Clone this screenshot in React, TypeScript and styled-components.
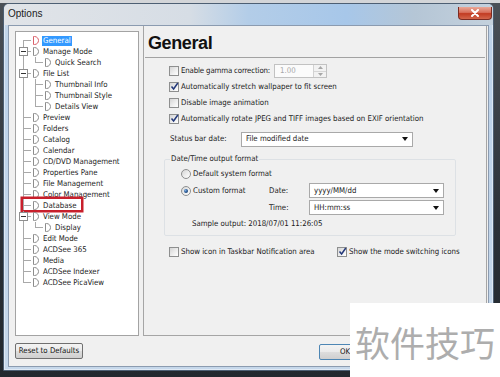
import React from "react";
import styled, { createGlobalStyle } from "styled-components";

const UI_FONT = `"DejaVu Sans Condensed", "Liberation Sans", Arial, sans-serif`;
const UI_SIZE = "7.8px";

const GlobalStyle = createGlobalStyle`
  html, body {
    margin: 0;
    padding: 0;
    background: #2e343a;
  }
  body {
    font-family: ${UI_FONT};
  }
  * {
    box-sizing: border-box;
  }
`;

type Line = "full" | "top" | "bottom" | "none";

interface TreeItem {
  label: string;
  level: 0 | 1;
  expand?: boolean;
  lastChild?: boolean;
  selected?: boolean;
  marked?: boolean;
}

const treeItems: TreeItem[] = [
  { label: "General", level: 0, selected: true },
  { label: "Manage Mode", level: 0, expand: true },
  { label: "Quick Search", level: 1, lastChild: true },
  { label: "File List", level: 0, expand: true },
  { label: "Thumbnail Info", level: 1 },
  { label: "Thumbnail Style", level: 1 },
  { label: "Details View", level: 1, lastChild: true },
  { label: "Preview", level: 0 },
  { label: "Folders", level: 0 },
  { label: "Catalog", level: 0 },
  { label: "Calendar", level: 0 },
  { label: "CD/DVD Management", level: 0 },
  { label: "Properties Pane", level: 0 },
  { label: "File Management", level: 0 },
  { label: "Color Management", level: 0 },
  { label: "Database", level: 0, marked: true },
  { label: "View Mode", level: 0, expand: true },
  { label: "Display", level: 1, lastChild: true },
  { label: "Edit Mode", level: 0 },
  { label: "ACDSee 365", level: 0 },
  { label: "Media", level: 0 },
  { label: "ACDSee Indexer", level: 0 },
  { label: "ACDSee PicaView", level: 0 },
];

export default function App() {
  const lastIndex = treeItems.length - 1;

  return (
    <>
      <GlobalStyle />
      <Desktop>
        <Window>
          <TitleBar>
            <Title>Options</Title>
            <CloseButton>
              <svg width="10" height="8" viewBox="0 0 10 8">
                <path d="M2 1 L8 7 M8 1 L2 7" stroke="#fff" strokeWidth="2" strokeLinecap="round" />
              </svg>
            </CloseButton>
          </TitleBar>

          <Client>
            <MainRow>
              <Tree>
                {treeItems.map((item, i) => {
                  let outer: Line = "full";
                  if (i === 0) outer = "bottom";
                  if (i === lastIndex) outer = "top";
                  return (
                    <TreeRow key={item.label}>
                      <Guide $line={outer} $branch={item.level === 0}>
                        {item.expand && <Expander />}
                      </Guide>
                      {item.level === 1 && <Guide $line={item.lastChild ? "top" : "full"} $branch />}
                      <PageIcon active={item.selected} />
                      <TreeLabel $selected={item.selected}>{item.label}</TreeLabel>
                      {item.marked && <Marker />}
                    </TreeRow>
                  );
                })}
              </Tree>

              <Pane>
                <PaneHeading>General</PaneHeading>
                <Separator />
                <Options>
                  <CheckRow>
                    <CheckBox />
                    <GammaLabel>Enable gamma correction:</GammaLabel>
                    <SpinBox>
                      <SpinValue>1.00</SpinValue>
                      <SpinButtons>
                        <SpinHalf>
                          <svg width="5" height="3" viewBox="0 0 5 3"><path d="M0 3 L2.5 0 L5 3 Z" fill="#a7a7a7" /></svg>
                        </SpinHalf>
                        <SpinHalf>
                          <svg width="5" height="3" viewBox="0 0 5 3"><path d="M0 0 L5 0 L2.5 3 Z" fill="#a7a7a7" /></svg>
                        </SpinHalf>
                      </SpinButtons>
                    </SpinBox>
                  </CheckRow>
                  <CheckRow>
                    <CheckBox checked />
                    <Text>Automatically stretch wallpaper to fit screen</Text>
                  </CheckRow>
                  <CheckRow>
                    <CheckBox />
                    <Text>Disable image animation</Text>
                  </CheckRow>
                  <CheckRow>
                    <CheckBox checked />
                    <Text>Automatically rotate JPEG and TIFF images based on EXIF orientation</Text>
                  </CheckRow>

                  <StatusRow>
                    <FieldLabel $w={71}>Status bar date:</FieldLabel>
                    <Select $w={172}>
                      <Text>File modified date</Text>
                      <DropArrow />
                    </Select>
                  </StatusRow>

                  <Group>
                    <GroupLegend>Date/Time output format</GroupLegend>
                    <RadioRow>
                      <Radio />
                      <Text>Default system format</Text>
                    </RadioRow>
                    <FormatGrid>
                      <RadioRow>
                        <Radio selected />
                        <Text>Custom format</Text>
                      </RadioRow>
                      <FieldLabel $w={40}>Date:</FieldLabel>
                      <Select $w={135}>
                        <Text>yyyy/MM/dd</Text>
                        <DropArrow />
                      </Select>
                      <span />
                      <FieldLabel $w={40}>Time:</FieldLabel>
                      <Select $w={135}>
                        <Text>HH:mm:ss</Text>
                        <DropArrow />
                      </Select>
                    </FormatGrid>
                    <Sample>Sample output: 2018/07/01 11:26:05</Sample>
                  </Group>

                  <BottomChecks>
                    <CheckRow>
                      <CheckBox />
                      <Text>Show icon in Taskbar Notification area</Text>
                    </CheckRow>
                    <CheckRow>
                      <CheckBox checked />
                      <Text>Show the mode switching icons</Text>
                    </CheckRow>
                  </BottomChecks>
                </Options>
              </Pane>
            </MainRow>

            <ButtonBar>
              <PushButton $w={68}>Reset to Defaults</PushButton>
              {/* the other dialog buttons sit under the watermark */}
              <ButtonGroup>
                <PushButton $w={52} $primary>OK</PushButton>
              </ButtonGroup>
            </ButtonBar>
          </Client>
        </Window>

        <Watermark>软件技巧</Watermark>
      </Desktop>
    </>
  );
}

const PageIcon = ({ active }: { active?: boolean }) => (
  <IconSvg width="7" height="9" viewBox="0 0 7 9">
    <path
      d="M1.5 0.5 V8.5 M1.5 0.5 H2.5 C5 0.5 6.5 2.5 6.5 4.5 C6.5 6.5 5 8.5 2.5 8.5 H1.5"
      fill="none"
      stroke={active ? "#d9606a" : "#8c8c8c"}
      strokeWidth="1"
    />
  </IconSvg>
);

const CheckBox = ({ checked }: { checked?: boolean }) => (
  <Box>
    {checked && (
      <CheckMark width="9" height="9" viewBox="0 0 9 9">
        <path d="M1.5 4.5 L3.6 7 L7.8 1" stroke="#24397a" strokeWidth="1.5" fill="none" />
      </CheckMark>
    )}
  </Box>
);

const Radio = ({ selected }: { selected?: boolean }) => <Box $round>{selected && <RadioDot />}</Box>;

const DropArrow = () => (
  <svg width="6" height="4" viewBox="0 0 6 4">
    <path d="M0 0 H6 L3 4 Z" fill="#111" />
  </svg>
);

const Desktop = styled.div`
  position: relative;
  width: 500px;
  height: 377px;
  overflow: hidden;
  display: flex;
  padding: 3px 6px 6px 3px;
  background: linear-gradient(180deg, #d3d5d8 0px, #d3d5d8 3px, #4a5057 3px, #2b3138 60%, #22282e 100%);
`;

const Window = styled.div`
  flex: 1;
  display: flex;
  flex-direction: column;
  padding: 0 4px 3px 4px;
  border: 1px solid #4d5f73;
  border-radius: 6px 6px 0 0;
  background: linear-gradient(180deg, #cbd9e7 0%, #bcd2ea 12%, #c6d8eb 100%);
  box-shadow: inset 0 0 0 1px rgba(255, 255, 255, 0.45);
`;

const TitleBar = styled.div`
  display: flex;
  align-items: flex-start;
  height: 21px;
  margin: 0 -4px;
  padding: 0 1px 0 4px;
  border-radius: 5px 5px 0 0;
  background: linear-gradient(
    90deg,
    #e1e4e8 0%,
    #d6dde5 38%,
    #b3cde8 50%,
    #a7c7e9 70%,
    #b5c6d6 84%,
    #c4d1dd 100%
  );
`;

const Title = styled.span`
  margin-top: 5px;
  font: 10px/10px "Liberation Sans", Arial, sans-serif;
  color: #1b1b1b;
`;

const CloseButton = styled.div`
  margin-left: auto;
  margin-top: 3px;
  width: 34px;
  height: 13px;
  display: flex;
  align-items: center;
  justify-content: center;
  border: 1px solid #7b2b22;
  border-top: none;
  border-radius: 0 0 4px 4px;
  background: linear-gradient(180deg, #e9a796 0%, #d8705c 45%, #c23b22 55%, #d3664c 100%);
`;

const Client = styled.div`
  flex: 1;
  display: flex;
  flex-direction: column;
  background: #f0f0f0;
  border: 1px solid #8b9bb0;
`;

const MainRow = styled.div`
  display: flex;
  align-items: flex-start;
  gap: 4px;
  height: 310px;
`;

const Tree = styled.div`
  flex: none;
  width: 124px;
  height: 305px;
  margin: 5px 0 0 6px;
  padding: 3px 0 0 1px;
  background: #fff;
  border: 1px solid #a3a3a3;
`;

const TreeRow = styled.div`
  position: relative;
  display: flex;
  align-items: center;
  height: 11px;
`;

const Guide = styled.span<{ $line: Line; $branch?: boolean }>`
  position: relative;
  flex: none;
  width: 12px;
  height: 11px;

  &::before {
    content: "";
    position: absolute;
    left: 6px;
    width: 1px;
    top: ${(p) => (p.$line === "bottom" ? "5px" : "0")};
    bottom: ${(p) => (p.$line === "top" ? "5px" : "0")};
    background: #a9a9a9;
    display: ${(p) => (p.$line === "none" ? "none" : "block")};
  }

  &::after {
    content: "";
    position: absolute;
    left: 6px;
    top: 5px;
    width: 8px;
    height: 1px;
    background: #a9a9a9;
    display: ${(p) => (p.$branch ? "block" : "none")};
  }
`;

const Expander = styled.span`
  position: absolute;
  z-index: 1;
  left: 2px;
  top: 1px;
  width: 9px;
  height: 9px;
  border: 1px solid #8e8e8e;
  background: #fff;

  &::before {
    content: "";
    position: absolute;
    left: 1px;
    top: 3px;
    width: 5px;
    height: 1px;
    background: #333;
  }
`;

const IconSvg = styled.svg`
  flex: none;
  margin: 0 4px 0 3px;
`;

const TreeLabel = styled.span<{ $selected?: boolean }>`
  margin-left: -1px;
  padding: 0 1px;
  font-size: ${UI_SIZE};
  line-height: 10px;
  white-space: nowrap;
  color: ${(p) => (p.$selected ? "#fff" : "#1a1a1a")};
  background: ${(p) => (p.$selected ? "#3399ff" : "transparent")};
`;

const Marker = styled.span`
  position: absolute;
  left: 4px;
  top: -3px;
  width: 62px;
  height: 15px;
  border: 2px solid #c81f2b;
  box-shadow: 0 0 0 0.5px #c81f2b;
  pointer-events: none;
`;

const Pane = styled.div`
  flex: 1;
  display: flex;
  flex-direction: column;
  height: 310px;
  margin-right: 1px;
  border: 1px solid #a5a5a5;
  border-top: none;
`;

const PaneHeading = styled.h1`
  margin: 0;
  height: 31px;
  padding: 7px 0 0 4px;
  font: bold 18px/20px "Liberation Sans", Arial, sans-serif;
  letter-spacing: -0.4px;
  color: #111;
`;

const Separator = styled.div`
  height: 1px;
  margin: 0 1px;
  background: #a2a2a2;
`;

const Options = styled.div`
  display: flex;
  flex-direction: column;
  padding: 5px 0 0 25px;
`;

const Text = styled.span`
  font-size: ${UI_SIZE};
  line-height: 10px;
  white-space: nowrap;
  color: #1a1a1a;
`;

const GammaLabel = styled(Text)`
  letter-spacing: -0.15px;
`;

const CheckRow = styled.div`
  display: flex;
  align-items: center;
  gap: 2px;
  height: 16px;
`;

const Box = styled.span<{ $round?: boolean }>`
  position: relative;
  flex: none;
  display: flex;
  align-items: center;
  justify-content: center;
  width: 10px;
  height: 10px;
  border: 1px solid #8e8f8f;
  border-radius: ${(p) => (p.$round ? "50%" : "0")};
  background: linear-gradient(135deg, #d5d5d5 0%, #eeeeee 55%, #ffffff 100%);
`;

const CheckMark = styled.svg`
  position: absolute;
  left: 0;
  top: -1px;
`;

const RadioDot = styled.span`
  width: 4px;
  height: 4px;
  border-radius: 50%;
  background: radial-gradient(circle at 35% 35%, #7fb0e6 0%, #2a5a94 50%, #0e2a52 100%);
`;

const SpinBox = styled.div`
  display: flex;
  width: 53px;
  height: 14px;
  margin-left: 2px;
  border: 1px solid #c2c2c2;
  background: #fbfbfb;
`;

const SpinValue = styled.span`
  flex: 1;
  padding-left: 5px;
  font-size: ${UI_SIZE};
  line-height: 12px;
  color: #a8a8a8;
`;

const SpinButtons = styled.div`
  display: flex;
  flex-direction: column;
  width: 13px;
  border-left: 1px solid #d2d2d2;
`;

const SpinHalf = styled.span`
  flex: 1;
  display: flex;
  align-items: center;
  justify-content: center;
  background: #f2f2f2;

  & + & {
    border-top: 1px solid #d6d6d6;
  }
`;

const StatusRow = styled.div`
  display: flex;
  align-items: center;
  height: 16px;
  margin-top: 4px;
  padding-left: 1px;
`;

const FieldLabel = styled.span<{ $w: number }>`
  flex: none;
  width: ${(p) => p.$w}px;
  font-size: ${UI_SIZE};
  line-height: 10px;
  color: #1a1a1a;
`;

const Select = styled.div<{ $w: number }>`
  display: flex;
  align-items: center;
  justify-content: space-between;
  width: ${(p) => p.$w}px;
  height: 15px;
  padding: 0 4px;
  border: 1px solid #a9a9a9;
  background: #fff;
`;

const Group = styled.fieldset`
  width: 292px;
  margin: 7px 0 0 -5px;
  padding: 0 6px 5px 5px;
  border: 1px solid #dde1e5;
  border-radius: 2px;
`;

const GroupLegend = styled.legend`
  padding: 0 1px;
  font-size: ${UI_SIZE};
  line-height: 10px;
  color: #1a1a1a;
`;

const RadioRow = styled.div`
  display: flex;
  align-items: center;
  gap: 2px;
  height: 14px;
  margin: 3px 0 0 11px;
`;

const FormatGrid = styled.div`
  display: grid;
  grid-template-columns: 88px 40px 135px;
  grid-auto-rows: 15px;
  row-gap: 2px;
  align-items: center;
  margin-top: 2px;
  margin-left: 11px;

  & > ${RadioRow} {
    margin: 0;
  }
`;

const Sample = styled.div`
  height: 12px;
  margin: 3px 0 0 22px;
  font-size: ${UI_SIZE};
  line-height: 12px;
  color: #1a1a1a;
`;

const BottomChecks = styled.div`
  display: grid;
  grid-template-columns: 168px auto;
  margin-top: 8px;
`;

const ButtonBar = styled.div`
  display: flex;
  align-items: flex-start;
  justify-content: space-between;
  padding: 7px 3px 0 6px;
`;

const ButtonGroup = styled.div`
  display: flex;
  gap: 5px;
  margin-top: 1px;
  padding-right: 114px;
`;

const PushButton = styled.button<{ $w: number; $primary?: boolean }>`
  width: ${(p) => p.$w}px;
  height: 16px;
  padding: 0;
  border: 1px solid ${(p) => (p.$primary ? "#4d86b4" : "#707070")};
  border-radius: 2px;
  background: linear-gradient(180deg, #f3f3f3 0%, #ebebeb 48%, #dddddd 52%, #cfcfcf 100%);
  font-family: ${UI_FONT};
  font-size: ${UI_SIZE};
  line-height: 14px;
  color: #111;
  white-space: nowrap;
`;

const Watermark = styled.div`
  position: absolute;
  left: 350px;
  top: 303px;
  right: 0;
  bottom: 0;
  display: flex;
  align-items: center;
  justify-content: center;
  padding-top: 2px;
  background: #fff;
  font: 35px/1 "Noto Sans CJK SC", sans-serif;
  color: #adadad;
`;
